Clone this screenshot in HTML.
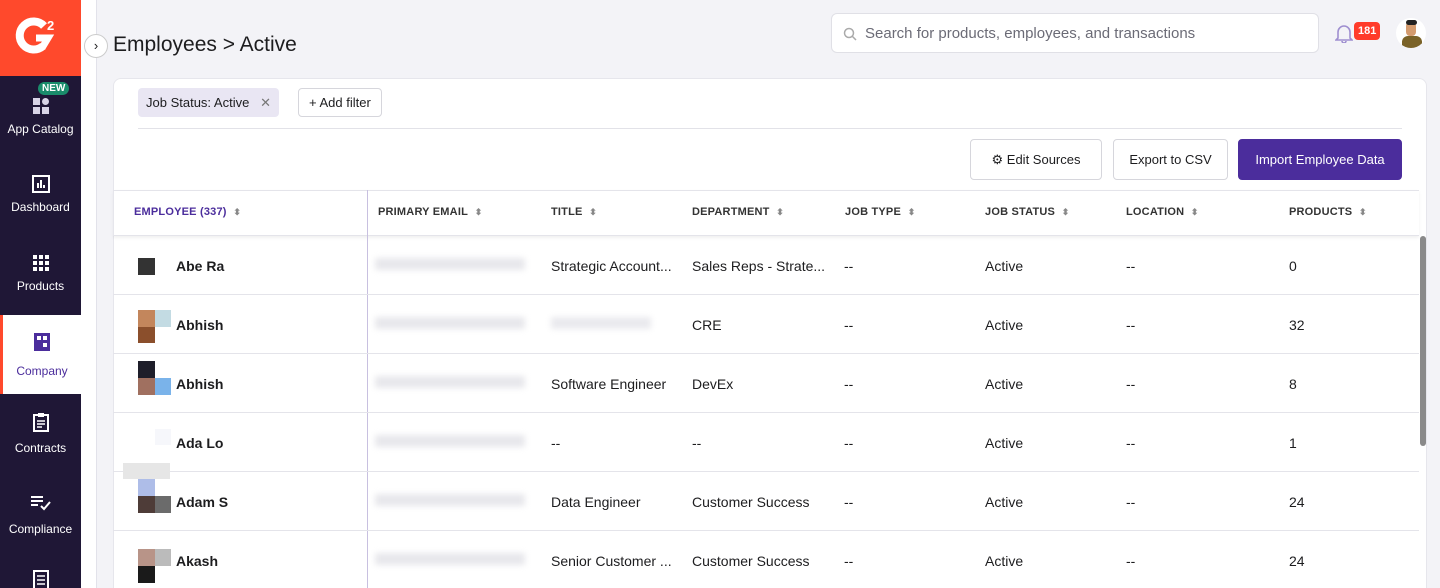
<!DOCTYPE html>
<html style="overflow:hidden"><head><style>
*{box-sizing:border-box;margin:0;padding:0}
html,body{width:1440px;height:588px;overflow:hidden}
body{background:#f3f3f7;font-family:"Liberation Sans",sans-serif;position:relative;color:#1d1d1f}
.sb{position:absolute;left:0;top:0;width:81px;height:588px;background:#1f1736}
.logo{position:absolute;left:0;top:0;width:81px;height:76px;background:#ff492c}
.strip{position:absolute;left:81px;top:0;width:16px;height:588px;background:#fff;border-right:1px solid #e2e2ea}
.nav{position:absolute;left:0;width:81px;text-align:center;color:#fff;font-size:12px}
.nav svg{display:block;margin:0 auto 7px}
.act{background:#fff;color:#4b2d9c;border-left:3px solid #ff492c}
.title{position:absolute;left:113px;top:33px;font-size:21px;color:#1d1d1f}
.tog{position:absolute;left:84px;top:34px;width:24px;height:24px;border-radius:50%;border:1px solid #ccc;background:#fff;font-size:13px;text-align:center;line-height:21px}
.search{position:absolute;left:831px;top:13px;width:488px;height:40px;background:#fff;border:1px solid #e0e0e6;border-radius:6px;font-size:15px;color:#6b6b76;padding:11px 0 0 33px}
.card{position:absolute;left:113px;top:78px;width:1314px;height:520px;background:#fff;border-radius:8px;border:1px solid #e6e6ec}
.chip{position:absolute;left:138px;top:88px;height:29px;padding:7px 8px;background:#e9e6f3;border-radius:4px;font-size:13px}
.add{position:absolute;left:298px;top:88px;height:29px;padding:6px 10px;border:1px solid #d6d6dc;border-radius:4px;font-size:13px;background:#fff}
.btn{position:absolute;top:139px;height:41px;border:1px solid #d6d6dc;border-radius:4px;font-size:13px;line-height:39px;text-align:center;background:#fff}
.th{position:absolute;top:206px;font-size:11px;font-weight:bold;color:#333;letter-spacing:.2px}
.th:after{content:" \2B0D";font-size:9px;color:#888;margin-left:4px}
.row{position:absolute;left:113px;width:1306px;height:59px;border-bottom:1px solid #e4e4ea}
.c{position:absolute;top:22px;font-size:14px}
</style></head><body>
<div class="sb"></div>
<div class="logo"><svg width="81" height="76" viewBox="0 0 81 76"><path d="M43 46 A14 14 0 1 1 44 26" fill="none" stroke="#fff" stroke-width="8"/><path d="M36 38h12l-6 10" fill="none" stroke="#fff" stroke-width="7"/><text x="47" y="30" fill="#fff" font-size="13" font-weight="bold" font-family="Liberation Sans">2</text></svg></div>
<div style="position:absolute;left:38px;top:82px;background:#1a8c6b;color:#fff;font-size:10px;font-weight:bold;padding:1px 4px;border-radius:7px">NEW</div>
<div class="nav" style="top:97px"><svg width="18" height="18"><rect x="1" y="1" width="7" height="7" fill="#d8d4e6"/><rect x="1" y="10" width="7" height="7" fill="#d8d4e6"/><rect x="10" y="10" width="7" height="7" fill="#d8d4e6"/><circle cx="13.5" cy="4.5" r="3.5" fill="#d8d4e6"/></svg>App Catalog</div>
<div class="nav" style="top:175px"><svg width="18" height="18"><rect x="1" y="1" width="16" height="16" fill="none" stroke="#fff" stroke-width="2"/><path d="M6 13V8M9 13V5M12 13V10" stroke="#fff" stroke-width="2"/></svg>Dashboard</div>
<div class="nav" style="top:254px"><svg width="18" height="18" fill="#fff"><rect x="1" y="1" width="4" height="4"/><rect x="7" y="1" width="4" height="4"/><rect x="13" y="1" width="4" height="4"/><rect x="1" y="7" width="4" height="4"/><rect x="7" y="7" width="4" height="4"/><rect x="13" y="7" width="4" height="4"/><rect x="1" y="13" width="4" height="4"/><rect x="7" y="13" width="4" height="4"/><rect x="13" y="13" width="4" height="4"/></svg>Products</div>
<div class="nav act" style="top:315px;height:79px;padding-top:17px"><svg width="18" height="20" style="margin-bottom:12px"><rect x="1" y="1" width="16" height="18" fill="#4b2d9c"/><rect x="4" y="4" width="4" height="4" fill="#fff"/><rect x="10" y="4" width="4" height="4" fill="#fff"/><rect x="10" y="11" width="4" height="4" fill="#fff"/></svg>Company</div>
<div class="nav" style="top:412px"><svg width="18" height="20" style="margin-bottom:9px"><rect x="2" y="3" width="14" height="16" fill="none" stroke="#fff" stroke-width="2"/><rect x="6" y="1" width="6" height="4" fill="#fff"/><path d="M5 9h8M5 12h8M5 15h5" stroke="#fff" stroke-width="1.6"/></svg>Contracts</div>
<div class="nav" style="top:494px"><svg width="22" height="18" style="margin-bottom:10px"><path d="M1 3h12M1 7h12M1 11h7M11 12l3 3 6-7" stroke="#fff" stroke-width="2" fill="none"/></svg>Compliance</div>
<div class="nav" style="top:570px"><svg width="18" height="20"><rect x="2" y="1" width="14" height="18" fill="none" stroke="#fff" stroke-width="2"/><path d="M5 6h8M5 10h8M5 14h8" stroke="#fff" stroke-width="1.6"/></svg></div>
<div class="strip"></div>
<div class="tog">›</div>
<div class="title">Employees &gt; Active</div>
<div class="search"><svg style="position:absolute;left:11px;top:13px" width="14" height="14"><circle cx="6" cy="6" r="4.5" fill="none" stroke="#aaa" stroke-width="1.5"/><path d="M9.5 9.5l3.5 3.5" stroke="#aaa" stroke-width="1.5"/></svg>Search for products, employees, and transactions</div>
<svg style="position:absolute;left:1335px;top:23px" width="18" height="20"><path d="M3 15V9a6 6 0 0 1 12 0v6l2 2H1z M7 18a2 2 0 0 0 4 0" fill="none" stroke="#9f8fd0" stroke-width="1.6"/></svg>
<div style="position:absolute;left:1354px;top:22px;background:#ff3b2a;color:#fff;font-size:11px;font-weight:bold;padding:3px 4px;border-radius:4px">181</div>
<div style="position:absolute;left:1396px;top:18px;width:30px;height:30px;border-radius:50%;background:#fff;overflow:hidden"><div style="position:absolute;left:6px;top:18px;width:20px;height:14px;background:#7a6228;border-radius:6px 6px 0 0"></div><div style="position:absolute;left:10px;top:4px;width:10px;height:14px;background:#d49b6e;border-radius:4px"></div><div style="position:absolute;left:10px;top:2px;width:11px;height:5px;background:#222;border-radius:3px"></div></div>
<div class="card"></div>
<div class="chip">Job Status: Active &nbsp;&nbsp;<span style="color:#777">✕</span></div>
<div class="add">+ Add filter</div>
<div style="position:absolute;left:138px;top:128px;width:1264px;height:1px;background:#e2e2e8"></div>
<div class="btn" style="left:970px;width:132px">⚙ Edit Sources</div>
<div class="btn" style="left:1113px;width:115px">Export to CSV</div>
<div class="btn" style="left:1238px;width:164px;background:#4b2d9c;color:#fff;border-color:#4b2d9c">Import Employee Data</div>
<div style="position:absolute;left:113px;top:190px;width:1306px;height:46px;border-top:1px solid #e4e4ea;border-bottom:1px solid #e4e4ea;box-shadow:0 2px 3px rgba(0,0,0,.06)"></div>
<div style="position:absolute;left:367px;top:190px;width:1px;height:398px;background:#c8c0e0"></div>
<div class="th" style="left:134px;color:#4b2d9c">EMPLOYEE (337)</div>
<div class="th" style="left:378px">PRIMARY EMAIL</div>
<div class="th" style="left:551px">TITLE</div>
<div class="th" style="left:692px">DEPARTMENT</div>
<div class="th" style="left:845px">JOB TYPE</div>
<div class="th" style="left:985px">JOB STATUS</div>
<div class="th" style="left:1126px">LOCATION</div>
<div class="th" style="left:1289px">PRODUCTS</div>
<div style="position:absolute;left:1420px;top:236px;width:6px;height:210px;background:#8a8a8a;border-radius:3px"></div>
<div class="row" style="top:236px"><div style="position:absolute;left:25px;top:22px;width:17px;height:17px;background:#333"></div><div class="c" style="left:63px;font-weight:bold">Abe Ra</div><div class="c" style="left:262px;width:150px;height:12px;background:#e8e8ec;filter:blur(3px)"></div><div class="c" style="left:438px">Strategic Account...</div><div class="c" style="left:579px">Sales Reps - Strate...</div><div class="c" style="left:731px">--</div><div class="c" style="left:872px">Active</div><div class="c" style="left:1013px">--</div><div class="c" style="left:1176px">0</div></div>
<div class="row" style="top:295px"><div style="position:absolute;left:25px;top:15px;width:17px;height:17px;background:#c3865c"></div><div style="position:absolute;left:42px;top:15px;width:16px;height:17px;background:#c3dbe3"></div><div style="position:absolute;left:25px;top:32px;width:17px;height:16px;background:#8b4f2c"></div><div class="c" style="left:63px;font-weight:bold">Abhish</div><div class="c" style="left:262px;width:150px;height:12px;background:#e8e8ec;filter:blur(3px)"></div><div class="c" style="left:438px;width:100px;height:12px;background:#eaeaee;filter:blur(3px)"></div><div class="c" style="left:579px">CRE</div><div class="c" style="left:731px">--</div><div class="c" style="left:872px">Active</div><div class="c" style="left:1013px">--</div><div class="c" style="left:1176px">32</div></div>
<div class="row" style="top:354px"><div style="position:absolute;left:25px;top:7px;width:17px;height:17px;background:#1e1e2a"></div><div style="position:absolute;left:25px;top:24px;width:17px;height:17px;background:#a07060"></div><div style="position:absolute;left:42px;top:24px;width:16px;height:17px;background:#7ab3ea"></div><div class="c" style="left:63px;font-weight:bold">Abhish</div><div class="c" style="left:262px;width:150px;height:12px;background:#e8e8ec;filter:blur(3px)"></div><div class="c" style="left:438px">Software Engineer</div><div class="c" style="left:579px">DevEx</div><div class="c" style="left:731px">--</div><div class="c" style="left:872px">Active</div><div class="c" style="left:1013px">--</div><div class="c" style="left:1176px">8</div></div>
<div class="row" style="top:413px"><div style="position:absolute;left:42px;top:16px;width:16px;height:16px;background:#f6f7fb"></div><div class="c" style="left:63px;font-weight:bold">Ada Lo</div><div class="c" style="left:262px;width:150px;height:12px;background:#e8e8ec;filter:blur(3px)"></div><div class="c" style="left:438px">--</div><div class="c" style="left:579px">--</div><div class="c" style="left:731px">--</div><div class="c" style="left:872px">Active</div><div class="c" style="left:1013px">--</div><div class="c" style="left:1176px">1</div></div>
<div style="position:absolute;left:123px;top:463px;width:47px;height:16px;background:#e6e6e6"></div>
<div class="row" style="top:472px"><div style="position:absolute;left:25px;top:7px;width:17px;height:17px;background:#aebde8"></div><div style="position:absolute;left:25px;top:24px;width:17px;height:17px;background:#4e3c38"></div><div style="position:absolute;left:42px;top:24px;width:16px;height:17px;background:#6b6b6b"></div><div class="c" style="left:63px;font-weight:bold">Adam S</div><div class="c" style="left:262px;width:150px;height:12px;background:#e8e8ec;filter:blur(3px)"></div><div class="c" style="left:438px">Data Engineer</div><div class="c" style="left:579px">Customer Success</div><div class="c" style="left:731px">--</div><div class="c" style="left:872px">Active</div><div class="c" style="left:1013px">--</div><div class="c" style="left:1176px">24</div></div>
<div class="row" style="top:531px"><div style="position:absolute;left:25px;top:18px;width:17px;height:17px;background:#b89488"></div><div style="position:absolute;left:42px;top:18px;width:16px;height:17px;background:#bbb"></div><div style="position:absolute;left:25px;top:35px;width:17px;height:17px;background:#1a1a1a"></div><div class="c" style="left:63px;font-weight:bold">Akash</div><div class="c" style="left:262px;width:150px;height:12px;background:#e8e8ec;filter:blur(3px)"></div><div class="c" style="left:438px">Senior Customer ...</div><div class="c" style="left:579px">Customer Success</div><div class="c" style="left:731px">--</div><div class="c" style="left:872px">Active</div><div class="c" style="left:1013px">--</div><div class="c" style="left:1176px">24</div></div>
</body></html>
